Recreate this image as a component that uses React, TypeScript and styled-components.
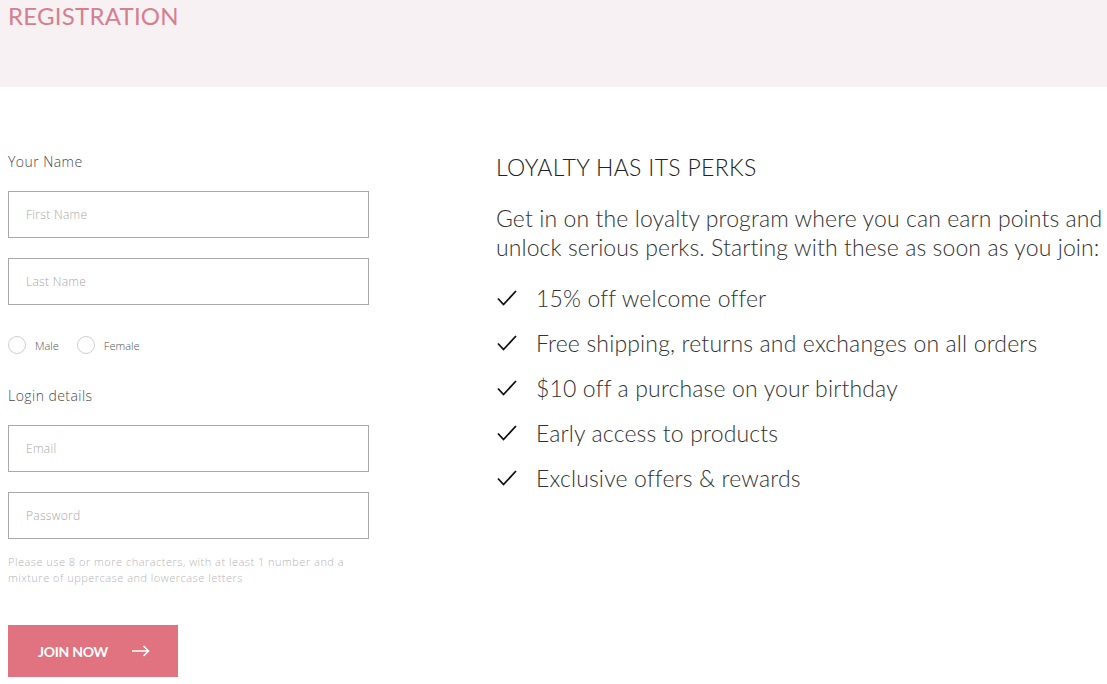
import React from 'react';
import styled, { createGlobalStyle } from 'styled-components';

const GlobalStyle = createGlobalStyle`
    body {
        margin: 0;
        background: #ffffff;
        font-family: Lato, 'Open Sans', sans-serif;
    }
`;

const Page = styled.div`
    width: 1107px;
    height: 684px;
    overflow: hidden;
`;

const Header = styled.header`
    height: 87px;
    box-sizing: border-box;
    padding: 1px 8px 0;
    background: #f7f1f3;
`;

const Title = styled.h1`
    margin: 0;
    font-family: Lato, sans-serif;
    font-weight: 400;
    font-size: 24px;
    line-height: 30px;
    color: #d4808f;
    letter-spacing: 0.01em;
`;

const Main = styled.main`
    display: flex;
    align-items: flex-start;
    gap: 127px;
    padding: 67px 8px 0;
`;

const FormCol = styled.form`
    width: 361px;
    display: flex;
    flex-direction: column;
    font-family: 'Open Sans', Lato, sans-serif;
    font-weight: 300;
`;

const Label = styled.div`
    font-size: 14px;
    line-height: 16px;
    color: #4a4a4a;
    letter-spacing: 0.45px;
    margin-bottom: ${(props: { mb: string }) => props.mb};
`;

const Input = styled.input`
    box-sizing: border-box;
    width: 361px;
    height: 47px;
    border: 1px solid #a9a9a9;
    padding: 0 17px;
    font-family: 'Open Sans', Lato, sans-serif;
    font-weight: 300;
    font-size: 12px;
    letter-spacing: 0.3px;
    color: #555555;
    outline: none;
    margin-bottom: ${(props: { mb: string }) => props.mb};
    &::placeholder {
        color: #a8a8a8;
    }
`;

const RadioRow = styled.div`
    display: flex;
    align-items: center;
    height: 18px;
    margin-bottom: 34px;
`;

const RadioOption = styled.label`
    display: flex;
    align-items: center;
    font-size: 11px;
    color: #555555;
    margin-right: 18px;
`;

const RadioCircle = styled.span`
    width: 16px;
    height: 16px;
    border: 1px solid #cfcfcf;
    border-radius: 50%;
    margin-right: 9px;
`;

const Hint = styled.p`
    margin: 0 0 39px;
    font-size: 11px;
    line-height: 16px;
    letter-spacing: 0.5px;
    color: #b5b5b5;
    width: 350px;
`;

const JoinButton = styled.button`
    width: 170px;
    height: 52px;
    border: none;
    background: #e0737f;
    color: #ffffff;
    font-family: Lato, sans-serif;
    font-weight: 700;
    font-size: 14px;
    letter-spacing: -0.3px;
    display: flex;
    align-items: center;
    padding: 0 0 0 30px;
    gap: 24px;
    cursor: pointer;
`;

const PerksCol = styled.section`
    flex: 1;
    color: #333333;
    font-family: Lato, sans-serif;
    font-weight: 300;
`;

const PerksTitle = styled.h2`
    margin: 0 0 24px;
    font-weight: 300;
    font-size: 23px;
    line-height: 26px;
    letter-spacing: 0.35px;
    color: #222222;
`;

const Intro = styled.p`
    margin: 0 0 13px;
    font-size: 23px;
    line-height: 29px;
    letter-spacing: 0.1px;
    color: #333333;
    white-space: nowrap;
`;

const PerkList = styled.ul`
    list-style: none;
    margin: 0;
    padding: 0;
`;

const PerkItem = styled.li`
    display: flex;
    align-items: center;
    height: 45px;
    font-size: 23px;
    letter-spacing: 0.15px;
    color: #333333;
`;

const Check = styled.svg`
    width: 20px;
    height: 16px;
    margin: 0 19px 0 1px;
    flex-shrink: 0;
`;

const perks = [
    '15% off welcome offer',
    'Free shipping, returns and exchanges on all orders',
    '$10 off a purchase on your birthday',
    'Early access to products',
    'Exclusive offers & rewards',
];

export default function App() {
    return (
        <Page>
            <GlobalStyle />
            <Header>
                <Title>REGISTRATION</Title>
            </Header>
            <Main>
                <FormCol onSubmit={(e) => e.preventDefault()}>
                    <Label mb="21px">Your Name</Label>
                    <Input mb="20px" placeholder="First Name" />
                    <Input mb="31px" placeholder="Last Name" />
                    <RadioRow>
                        <RadioOption>
                            <RadioCircle />
                            Male
                        </RadioOption>
                        <RadioOption>
                            <RadioCircle />
                            Female
                        </RadioOption>
                    </RadioRow>
                    <Label mb="21px">Login details</Label>
                    <Input mb="20px" placeholder="Email" />
                    <Input mb="15px" type="password" placeholder="Password" />
                    <Hint>
                        Please use 8 or more characters, with at least 1 number and a
                        mixture of uppercase and lowercase letters
                    </Hint>
                    <JoinButton type="submit">
                        JOIN NOW
                        <svg width="18" height="12" viewBox="0 0 18 12" fill="none">
                            <path
                                d="M0 6h16.5M11.5 1l5 5-5 5"
                                stroke="#ffffff"
                                strokeWidth="1.6"
                            />
                        </svg>
                    </JoinButton>
                </FormCol>
                <PerksCol>
                    <PerksTitle>LOYALTY HAS ITS PERKS</PerksTitle>
                    <Intro>
                        Get in on the loyalty program where you can earn points and
                        <br />
                        unlock serious perks. Starting with these as soon as you join:
                    </Intro>
                    <PerkList>
                        {perks.map((perk) => (
                            <PerkItem key={perk}>
                                <Check viewBox="0 0 20 16" fill="none">
                                    <path
                                        d="M1 8.5l5.5 6L19 1"
                                        stroke="#111111"
                                        strokeWidth="1.8"
                                    />
                                </Check>
                                {perk}
                            </PerkItem>
                        ))}
                    </PerkList>
                </PerksCol>
            </Main>
        </Page>
    );
}
